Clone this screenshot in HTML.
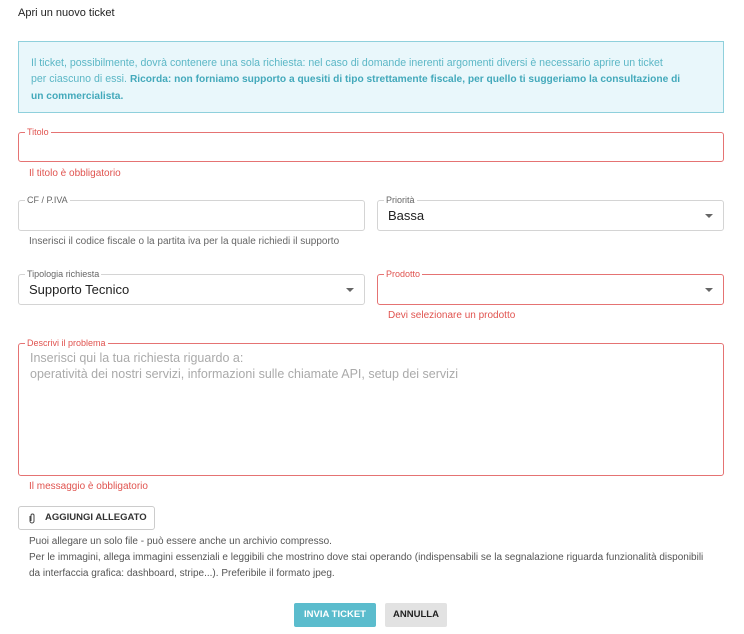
<!DOCTYPE html>
<html><head><meta charset="utf-8"><style>
body{margin:0;width:744px;height:634px;background:#fff;font-family:"Liberation Sans",sans-serif;position:relative;overflow:hidden;color:#333}
.a{position:absolute}
.f{position:absolute;border:1px solid #d4d4d4;border-radius:3px;box-sizing:border-box}
.f.e{border-color:#e57373}
.lab{position:absolute;top:-7px;left:8px;background:#fff;padding:0 2px;font-size:9px;color:#666;line-height:12px}
.e .lab{color:#e0534f}
.err{position:absolute;font-size:10px;color:#e0534f}
.hint{position:absolute;font-size:10px;color:#666}
.val{position:absolute;left:10px;font-size:13px;color:#222}
.arr{position:absolute;right:10px;top:13px;width:0;height:0;border-left:4px solid transparent;border-right:4px solid transparent;border-top:4px solid #666}
</style></head><body>
<div class="a" style="left:18px;top:7px;font-size:11px;color:#222">Apri un nuovo ticket</div>
<div class="a" style="left:18px;top:41px;width:706px;height:72px;box-sizing:border-box;border:1px solid #8fd0dc;background:#e9f7fb;padding:13px 12px;font-size:10.6px;line-height:16px;color:#5cb7c6;white-space:nowrap">Il ticket, possibilmente, dovrà contenere una sola richiesta: nel caso di domande inerenti argomenti diversi è necessario aprire un ticket<br>per ciascuno di essi. <b style="color:#43a9bb;font-size:10.2px">Ricorda: non forniamo supporto a quesiti di tipo strettamente fiscale, per quello ti suggeriamo la consultazione di<br>un commercialista.</b></div>

<div class="f e" style="left:18px;top:132px;width:706px;height:30px"><span class="lab" style="left:6px">Titolo</span></div>
<div class="err" style="left:29px;top:168px">Il titolo è obbligatorio</div>

<div class="f" style="left:18px;top:200px;width:347px;height:31px"><span class="lab" style="left:6px">CF / P.IVA</span></div>
<div class="hint" style="left:29px;top:236px">Inserisci il codice fiscale o la partita iva per la quale richiedi il supporto</div>
<div class="f" style="left:377px;top:200px;width:347px;height:31px"><span class="lab" style="left:6px">Priorità</span><span class="val" style="top:7px">Bassa</span><span class="arr"></span></div>

<div class="f" style="left:18px;top:274px;width:347px;height:31px"><span class="lab" style="left:6px">Tipologia richiesta</span><span class="val" style="top:7px">Supporto Tecnico</span><span class="arr"></span></div>
<div class="f e" style="left:377px;top:274px;width:347px;height:31px"><span class="lab" style="left:6px">Prodotto</span><span class="arr"></span></div>
<div class="err" style="left:388px;top:310px">Devi selezionare un prodotto</div>

<div class="f e" style="left:18px;top:343px;width:706px;height:133px"><span class="lab" style="left:6px">Descrivi il problema</span>
<div class="a" style="left:11px;top:6px;font-size:12.5px;line-height:16px;color:#aaa">Inserisci qui la tua richiesta riguardo a:<br>operatività dei nostri servizi, informazioni sulle chiamate API, setup dei servizi</div></div>
<div class="err" style="left:29px;top:481px">Il messaggio è obbligatorio</div>

<div class="a" style="left:18px;top:506px;width:137px;height:24px;box-sizing:border-box;border:1px solid #ccc;border-radius:3px;font-size:9.5px;font-weight:bold;color:#333;line-height:22px">
<svg class="a" style="left:9px;top:6px" width="8" height="11" viewBox="0 0 8 11"><path d="M2 3v5a2 2 0 0 0 4 0V2.5a1.5 1.5 0 0 0-3 0V8" fill="none" stroke="#444" stroke-width="1"/></svg>
<span class="a" style="left:26px;top:0">AGGIUNGI ALLEGATO</span></div>
<div class="hint" style="left:29px;top:534px;line-height:16px;color:#555;font-size:10px;white-space:nowrap">Puoi allegare un solo file - può essere anche un archivio compresso.<br>Per le immagini, allega immagini essenziali e leggibili che mostrino dove stai operando (indispensabili se la segnalazione riguarda funzionalità disponibili<br>da interfaccia grafica: dashboard, stripe...). Preferibile il formato jpeg.</div>

<div class="a" style="left:294px;top:603px;width:82px;height:24px;background:#5bbccd;border-radius:2px;color:#fff;font-size:9.5px;font-weight:bold;text-align:center;line-height:24px">INVIA TICKET</div>
<div class="a" style="left:385px;top:603px;width:62px;height:24px;background:#e2e2e2;border-radius:2px;color:#222;font-size:9.5px;font-weight:bold;text-align:center;line-height:24px">ANNULLA</div>
</body></html>
